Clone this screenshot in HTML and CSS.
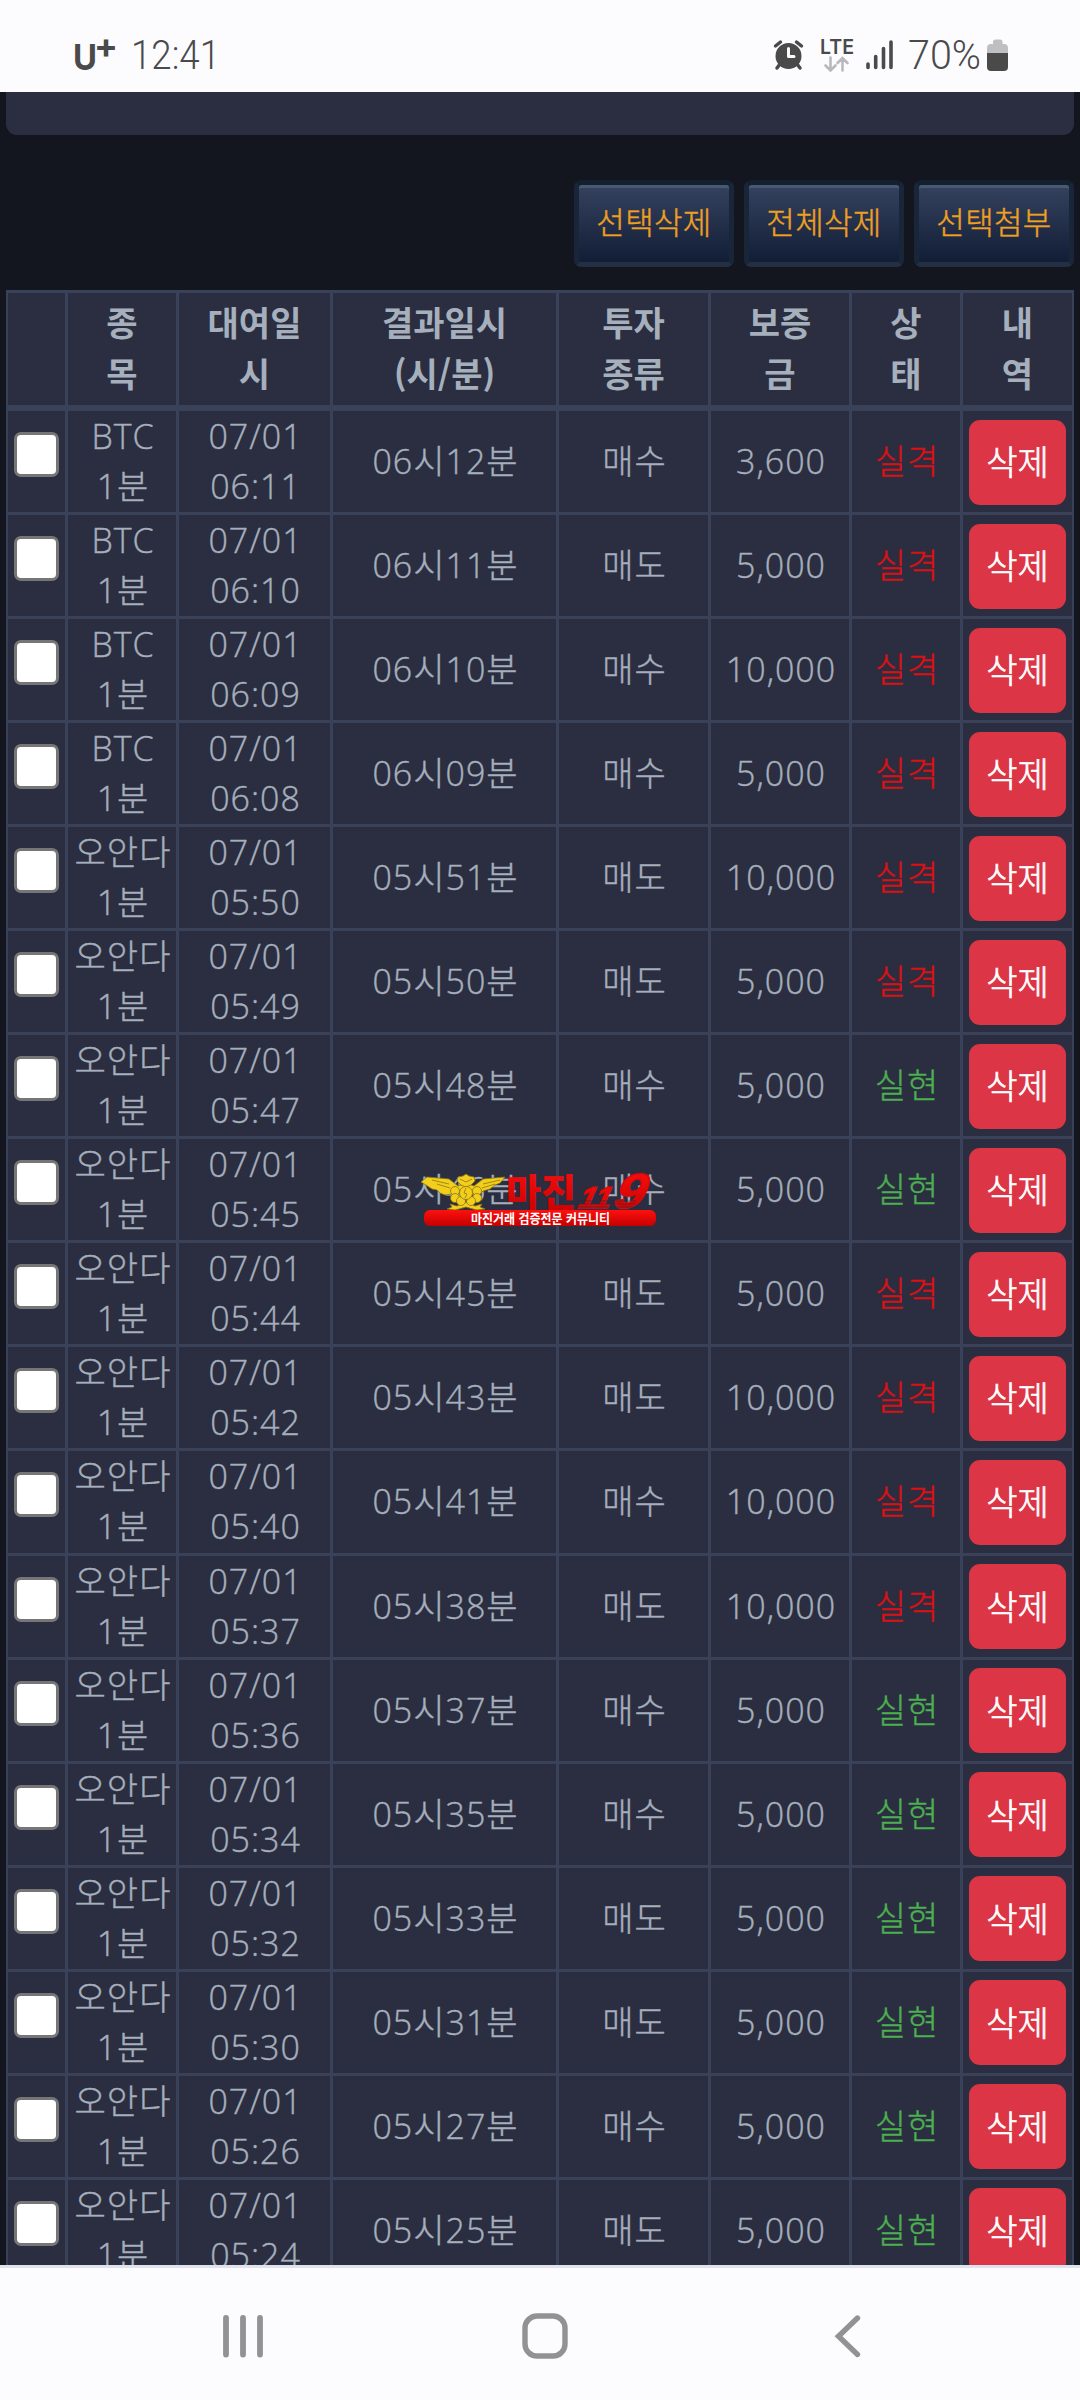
FILE: index.html
```html
<!DOCTYPE html>
<html lang="ko">
<head>
    <meta charset="UTF-8">
    <meta name="viewport" content="width=device-width, initial-scale=1.0">
    <title>거래내역</title>
    <link rel="stylesheet" href="styles.css">
</head>
<body>
    <header class="status-bar">
        <svg width="1080" height="92" viewBox="0 0 1080 92">
            <g class="status-text">
                <text class="carrier" x="73" y="70" font-size="36" textLength="24" lengthAdjust="spacingAndGlyphs">U</text>
                <text class="carrier" x="94" y="58" font-size="34" textLength="24" lengthAdjust="spacingAndGlyphs">+</text>
                <text x="131" y="68.500" font-size="41" textLength="89" lengthAdjust="spacingAndGlyphs">12:41</text>
                <text class="lte" x="820" y="53.500" font-size="20" textLength="34" lengthAdjust="spacingAndGlyphs">LTE</text>
                <text x="908" y="68.500" font-size="41" textLength="73" lengthAdjust="spacingAndGlyphs">70%</text>
            </g>
            <!-- alarm -->
            <circle cx="788.500" cy="56" r="13" fill="#4a4a4b"/>
            <path d="M775.500 46l5-4M801.500 46l-5-4M780 64l-3 4M797 64l3 4" stroke="#4a4a4b" stroke-width="3.500" stroke-linecap="round"/>
            <path d="M788.500 48.500v8h5.500" stroke="#fcfcff" stroke-width="3" fill="none" stroke-linecap="round" stroke-linejoin="round"/>
            <!-- data arrows -->
            <path d="M830.500 57.500v12.500M825.500 65.500l5 5 5-5M842.500 70.500v-12.500M837.500 63l5-5 5 5" stroke="#b9b9bb" stroke-width="2.600" fill="none" stroke-linecap="round"/>
            <!-- signal -->
            <path d="M868 64v3.500M875.700 56.500v11M883.500 48.500v19M891 42v25.500" stroke="#4a4a4b" stroke-width="3.600" stroke-linecap="round"/>
            <!-- battery -->
            <path d="M987 54v-6q0-4 4-4h2v-2q0-2.500 2.500-2.500h4.500q2.500 0 2.500 2.500v2h1.500q4 0 4 4v6z" fill="#bfbfc1"/>
            <path d="M987 53h21v14q0 4-4 4h-13q-4 0-4-4z" fill="#4a4a4b"/>
        </svg>
    </header>

    <main class="page">
        <div class="panel"></div>
        <div class="actions">
            <button class="btn-dark">선택삭제</button>
            <button class="btn-dark">전체삭제</button>
            <button class="btn-dark">선택첨부</button>
        </div>

        <table class="history">
            <thead>
                <tr>
                    <th></th>
                    <th>종<br>목</th>
                    <th>대여일<br>시</th>
                    <th>결과일시<br>(시/분)</th>
                    <th>투자<br>종류</th>
                    <th>보증<br>금</th>
                    <th>상<br>태</th>
                    <th>내<br>역</th>
                </tr>
            </thead>
            <tbody id="historyBody"></tbody>
        </table>

        <!-- watermark logo -->
        <svg class="watermark" width="240" height="60" viewBox="0 0 240 60">
            <defs>
                <linearGradient id="red" x1="0" y1="0" x2="0" y2="1">
                    <stop offset="0" stop-color="#ff1010"/>
                    <stop offset="1" stop-color="#c40000"/>
                </linearGradient>
            </defs>
            <g fill="#f3cf1d" stroke="#8d7410" stroke-width=".8" stroke-linejoin="round">
                <path d="M30 34l7 2 9-4 9 4 7-2-2 3 5 2-8 1-4-1-7-2-7 2-4 1-8-1 5-2z"/>
                <path d="M7 7l22 2 9 7 8-3 8 3 9-7 22-2-5 6-5 2-5 4-7 2-3 3-9 1-13-2-13 2-5-2-3-3-5-1-6-4-5-3z"/>
                <path d="M46 4l3 2 5 1 1 4-4 4-5 2-5-2-4-4 1-4 5-1z"/>
                <circle cx="35" cy="21" r="4.500"/>
                <circle cx="57" cy="21" r="4.500"/>
                <circle cx="35" cy="28" r="4.500"/>
                <circle cx="57" cy="28" r="4.500"/>
                <circle cx="41" cy="31" r="4.500"/>
                <circle cx="51" cy="31" r="4.500"/>
                <circle cx="46" cy="23" r="6.500"/>
                <path d="M12 10l17 4M17 14l13 4M80 10l-17 4M75 14l-13 4M40 9l6 3 6-3M46 18l-2 5 3 1-2 4" fill="none"/>
            </g>
            <text class="mark-name" x="86" y="36" font-size="38" textLength="70" lengthAdjust="spacingAndGlyphs">마진</text>
            <g transform="translate(0 38) skewX(-24)">
                <text class="mark-number" x="156" y="0" font-size="30" textLength="32" lengthAdjust="spacingAndGlyphs">11</text>
                <text class="mark-number" x="190" y="0" font-size="49" textLength="31" lengthAdjust="spacingAndGlyphs">9</text>
            </g>
            <path d="M156 31h60M156 34h60M156 37h60" stroke="#2a2e40" stroke-width=".8" opacity=".7"/>
            <rect x="4" y="40" width="232" height="16" rx="6" fill="url(#red)"/>
            <text class="mark-sub" x="51" y="52.500" font-size="13" textLength="139" lengthAdjust="spacingAndGlyphs">마진거래 검증전문 커뮤니티</text>
        </svg>
    </main>

    <nav class="nav-bar">
        <svg width="1080" height="132" viewBox="0 0 1080 132" fill="none" stroke="#929294" stroke-linecap="round">
            <path d="M226 50v36.500M243 50v36.500M260 50v36.500" stroke-width="5.800"/>
            <rect x="525" y="48" width="40" height="40" rx="12" stroke-width="5.400"/>
            <path d="M857.500 50L838.500 68.200 857.500 86.500" stroke-width="5.400"/>
        </svg>
    </nav>

    <script>
        const history = [
            ['BTC', '06:11', '06시12분', '매수', '3,600', '실격'],
            ['BTC', '06:10', '06시11분', '매도', '5,000', '실격'],
            ['BTC', '06:09', '06시10분', '매수', '10,000', '실격'],
            ['BTC', '06:08', '06시09분', '매수', '5,000', '실격'],
            ['오안다', '05:50', '05시51분', '매도', '10,000', '실격'],
            ['오안다', '05:49', '05시50분', '매도', '5,000', '실격'],
            ['오안다', '05:47', '05시48분', '매수', '5,000', '실현'],
            ['오안다', '05:45', '05시46분', '매수', '5,000', '실현'],
            ['오안다', '05:44', '05시45분', '매도', '5,000', '실격'],
            ['오안다', '05:42', '05시43분', '매도', '10,000', '실격'],
            ['오안다', '05:40', '05시41분', '매수', '10,000', '실격'],
            ['오안다', '05:37', '05시38분', '매도', '10,000', '실격'],
            ['오안다', '05:36', '05시37분', '매수', '5,000', '실현'],
            ['오안다', '05:34', '05시35분', '매수', '5,000', '실현'],
            ['오안다', '05:32', '05시33분', '매도', '5,000', '실현'],
            ['오안다', '05:30', '05시31분', '매도', '5,000', '실현'],
            ['오안다', '05:26', '05시27분', '매수', '5,000', '실현'],
            ['오안다', '05:24', '05시25분', '매도', '5,000', '실현']
        ].map(([item, time, result, type, amount, state]) => ({ item, time, result, type, amount, state }));

        const body = document.getElementById('historyBody');
        history.forEach(data => {
            const row = document.createElement('tr');
            const stateClass = data.state === '실현' ? 'win' : 'lose';
            row.innerHTML = `
                <td class="check"><input type="checkbox"></td>
                <td>${data.item}<br>1분</td>
                <td>07/01<br>${data.time}</td>
                <td>${data.result}</td>
                <td>${data.type}</td>
                <td>${data.amount}</td>
                <td class="${stateClass}">${data.state}</td>
                <td class="action"><button class="btn-delete">삭제</button></td>
            `;
            body.appendChild(row);
        });
    </script>
</body>
</html>
```
FILE: styles.css
```css
* {
    box-sizing: border-box;
}
body {
    margin: 0;
    height: 2400px;
    display: flex;
    flex-direction: column;
    overflow: hidden;
    background: #13151f;
    color: #a6afbc;
    font-family: "Open Sans", "Noto Sans CJK KR", sans-serif;
    font-weight: 300;
    font-size: 34px;
}
svg {
    display: block;
}
.status-bar {
    height: 92px;
    flex: none;
    background: #fcfcff;
}
.status-text {
    fill: #4a4a4b;
    font-family: Roboto, sans-serif;
    font-weight: 300;
}
.status-text .carrier {
    font-family: Inter, sans-serif;
    font-weight: 700;
}
.status-text .lte {
    font-family: Inter, sans-serif;
    font-weight: 600;
}
.page {
    flex: 1;
    min-height: 0;
    padding: 0 6px;
    overflow: hidden;
    position: relative;
}
.panel {
    height: 43px;
    background: #2a2e40;
    border-radius: 0 0 11px 11px;
}
.actions {
    display: flex;
    justify-content: flex-end;
    gap: 10px;
    margin-top: 45px;
    margin-bottom: 23px;
}
.btn-dark {
    width: 160px;
    height: 87px;
    padding: 0 0 6px;
    border: 5px solid #132030;
    border-bottom-color: #233044;
    border-left-color: #19263a;
    border-right-color: #19263a;
    border-radius: 7px;
    background: linear-gradient(#35425f, #121e36) padding-box;
    box-shadow: inset 0 3px 0 #4b5970;
    color: #f0a021;
    font-family: "Noto Sans CJK KR", sans-serif;
    font-weight: 300;
    font-size: 31px;
    letter-spacing: .3px;
    white-space: nowrap;
    -webkit-text-stroke: .4px;
}
.history {
    display: block;
    background: #2a2e40;
    border: 2px solid #3a4259;
    border-top-width: 3px;
}
.history thead,
.history tbody {
    display: block;
}
.history tr {
    display: grid;
    grid-template-columns: 60px 111px 154px 226px 152px 141px 111px 109px;
    height: 104.06px;
    border-bottom: 3px solid #3a4259;
}
.history thead tr {
    height: 118px;
    border-bottom-width: 6px;
}
.history th,
.history td {
    display: flex;
    align-items: center;
    justify-content: center;
    padding: 0 0 3px 2px;
    text-align: center;
    line-height: 50px;
    letter-spacing: 1px;
    white-space: nowrap;
    border-right: 3px solid #3a4259;
    -webkit-text-stroke: .4px;
}
.history th {
    padding: 0 0 5px;
    font-family: "Noto Sans CJK KR", sans-serif;
    font-weight: 700;
    line-height: 51px;
    letter-spacing: 0;
    -webkit-text-stroke: 0;
}
.history th:last-child,
.history td:last-child {
    border-right: 0;
}
.history .check {
    align-items: flex-start;
    padding: 0;
}
.history .action {
    padding: 0 0 1px;
    letter-spacing: 0;
}
.check input {
    appearance: none;
    width: 45px;
    height: 45px;
    margin: 21px 0 0;
    background: #fff;
    border: 3px solid #767676;
    border-radius: 7px;
}
.history .lose {
    color: #dc1014;
}
.history .win {
    color: #4caf50;
}
.btn-delete {
    width: 97px;
    height: 85px;
    padding: 0 0 3px;
    border: 0;
    border-radius: 11px;
    background: #dc3545;
    color: #fff;
    font-family: "Noto Sans CJK KR", sans-serif;
    font-weight: 300;
    font-size: 34px;
    -webkit-text-stroke: .7px;
}
.watermark {
    position: absolute;
    left: 420px;
    top: 1078px;
}
.mark-name,
.mark-sub {
    font-family: "Noto Sans CJK KR", sans-serif;
    font-weight: 900;
    fill: url(#red);
}
.mark-sub {
    font-weight: 700;
    fill: #fff;
}
.mark-number {
    font-family: "Liberation Sans", sans-serif;
    font-weight: 700;
    fill: url(#red);
    stroke: #e00808;
    stroke-width: 1.5px;
}
.nav-bar {
    height: 135px;
    flex: none;
    background: #fcfcff;
    border-top: 3px solid #dfe3ec;
}
```
